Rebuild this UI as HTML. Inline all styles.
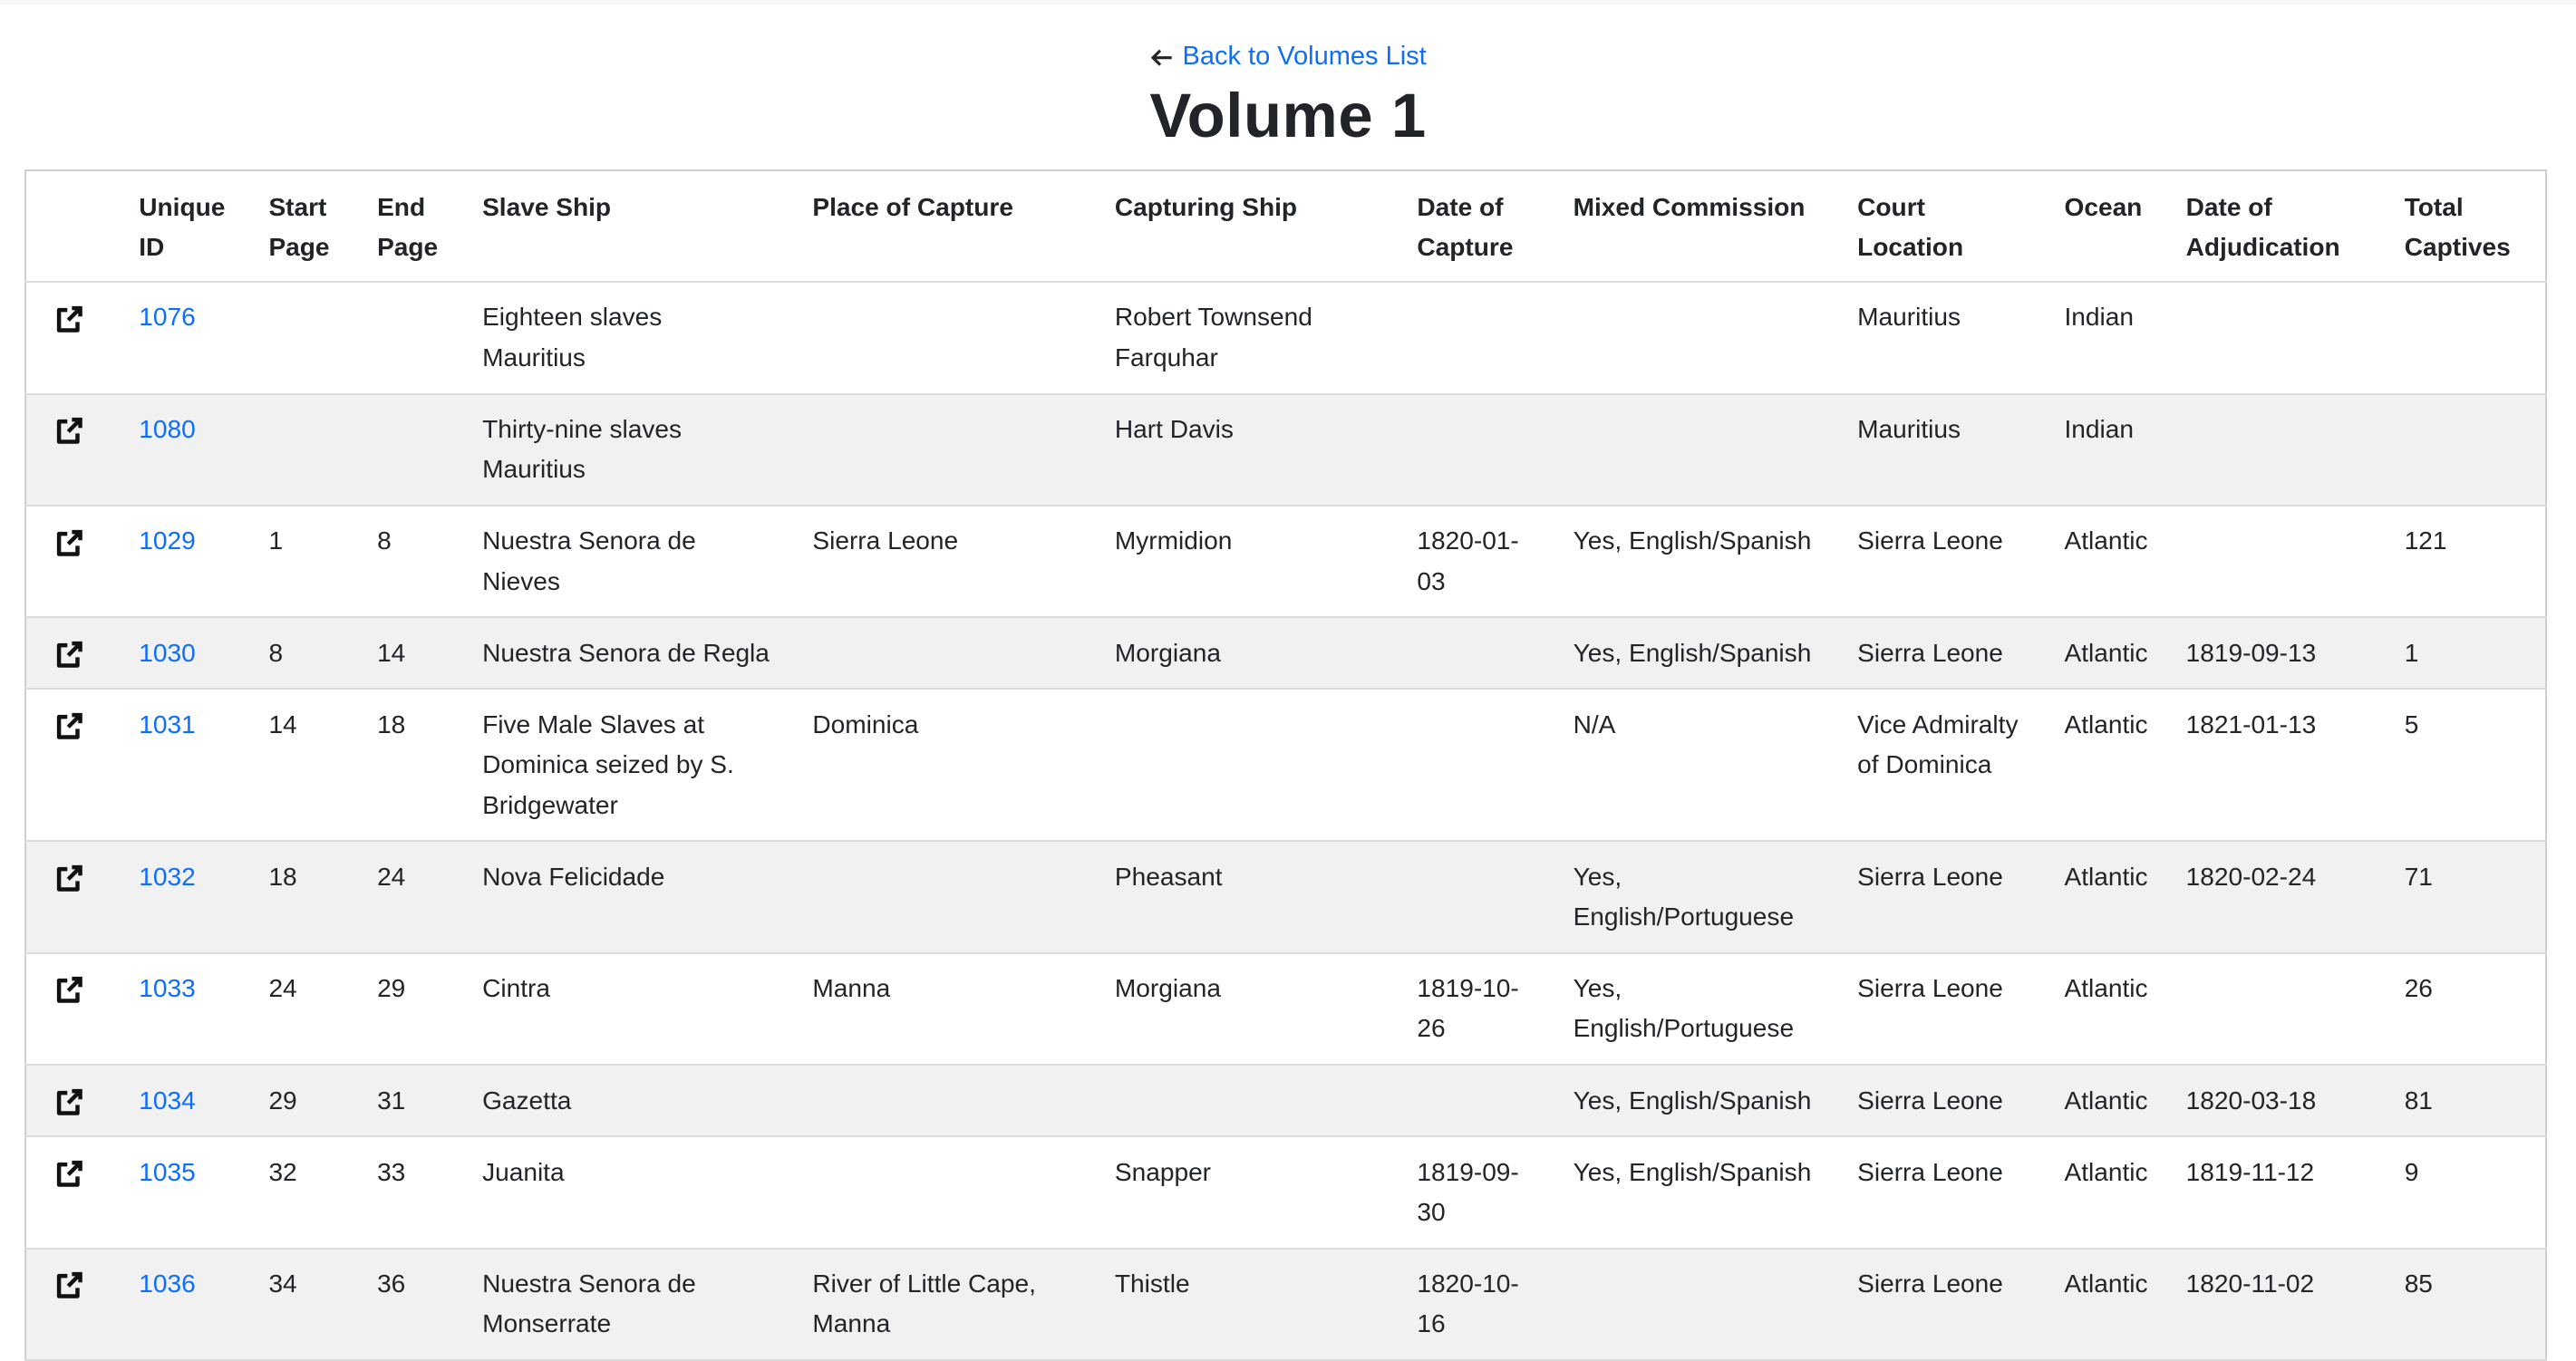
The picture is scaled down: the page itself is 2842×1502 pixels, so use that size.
<!DOCTYPE html>
<html><head><meta charset="utf-8"><style>
html{zoom:1.8125}
body{margin:0;width:1568px;height:811px;overflow:hidden;background:#fff;font-family:"Liberation Sans",sans-serif;color:#212529;font-size:15.5px;line-height:24.5px}
.top{height:3px;background:#f6f7f8}
.back{text-align:center;margin-top:21px;height:20px;line-height:20px;font-size:16px}
.back a{color:#0d6efd;text-decoration:none}
.back svg{vertical-align:-3px;margin-right:5px}
h1{margin:2px 0 0;text-align:center;font-size:38px;line-height:50px;font-weight:bold;height:55px;letter-spacing:0.3px}
table{position:absolute;left:15px;top:103px;width:1534px;border-collapse:collapse;table-layout:fixed;border:1.5px solid #cfcfcf}
td,th{padding:9px 10px 9px 10px;vertical-align:top;text-align:left;white-space:nowrap;border-bottom:1.5px solid #dcdcdc;line-height:24.5px}
th{font-weight:bold;padding-top:10px;padding-bottom:8px}
tr.s td{background:#f1f1f1}
td a{color:#0d6efd;text-decoration:none}
td.i{padding-left:17px}
td.i svg{display:block;margin-top:4px}
</style></head><body>
<div class="top"></div>
<div class="back"><a href="#"><svg width="15" height="14" viewBox="0 0 16 16"><path d="M15 8H2M7 3L2 8l5 5" fill="none" stroke="#212529" stroke-width="2"/></svg>Back to Volumes List</a></div>
<h1>Volume 1</h1>
<table>
<colgroup><col style="width:59px"><col style="width:79px"><col style="width:66px"><col style="width:64px"><col style="width:201px"><col style="width:184px"><col style="width:184px"><col style="width:95px"><col style="width:173px"><col style="width:126px"><col style="width:74px"><col style="width:133px"><col style="width:96px"></colgroup>
<tr><th></th><th>Unique<br>ID</th><th>Start<br>Page</th><th>End<br>Page</th><th>Slave Ship</th><th>Place of Capture</th><th>Capturing Ship</th><th>Date of<br>Capture</th><th>Mixed Commission</th><th>Court<br>Location</th><th>Ocean</th><th>Date of<br>Adjudication</th><th>Total<br>Captives</th></tr>
<tr><td class="i">ICON</td><td><a href="#">1076</a></td><td></td><td></td><td>Eighteen slaves<br>Mauritius</td><td></td><td>Robert Townsend<br>Farquhar</td><td></td><td></td><td>Mauritius</td><td>Indian</td><td></td><td></td></tr>
<tr class="s"><td class="i">ICON</td><td><a href="#">1080</a></td><td></td><td></td><td>Thirty-nine slaves<br>Mauritius</td><td></td><td>Hart Davis</td><td></td><td></td><td>Mauritius</td><td>Indian</td><td></td><td></td></tr>
<tr><td class="i">ICON</td><td><a href="#">1029</a></td><td>1</td><td>8</td><td>Nuestra Senora de<br>Nieves</td><td>Sierra Leone</td><td>Myrmidion</td><td>1820-01-<br>03</td><td>Yes, English/Spanish</td><td>Sierra Leone</td><td>Atlantic</td><td></td><td>121</td></tr>
<tr class="s"><td class="i">ICON</td><td><a href="#">1030</a></td><td>8</td><td>14</td><td>Nuestra Senora de Regla</td><td></td><td>Morgiana</td><td></td><td>Yes, English/Spanish</td><td>Sierra Leone</td><td>Atlantic</td><td>1819-09-13</td><td>1</td></tr>
<tr><td class="i">ICON</td><td><a href="#">1031</a></td><td>14</td><td>18</td><td>Five Male Slaves at<br>Dominica seized by S.<br>Bridgewater</td><td>Dominica</td><td></td><td></td><td>N/A</td><td>Vice Admiralty<br>of Dominica</td><td>Atlantic</td><td>1821-01-13</td><td>5</td></tr>
<tr class="s"><td class="i">ICON</td><td><a href="#">1032</a></td><td>18</td><td>24</td><td>Nova Felicidade</td><td></td><td>Pheasant</td><td></td><td>Yes,<br>English/Portuguese</td><td>Sierra Leone</td><td>Atlantic</td><td>1820-02-24</td><td>71</td></tr>
<tr><td class="i">ICON</td><td><a href="#">1033</a></td><td>24</td><td>29</td><td>Cintra</td><td>Manna</td><td>Morgiana</td><td>1819-10-<br>26</td><td>Yes,<br>English/Portuguese</td><td>Sierra Leone</td><td>Atlantic</td><td></td><td>26</td></tr>
<tr class="s"><td class="i">ICON</td><td><a href="#">1034</a></td><td>29</td><td>31</td><td>Gazetta</td><td></td><td></td><td></td><td>Yes, English/Spanish</td><td>Sierra Leone</td><td>Atlantic</td><td>1820-03-18</td><td>81</td></tr>
<tr><td class="i">ICON</td><td><a href="#">1035</a></td><td>32</td><td>33</td><td>Juanita</td><td></td><td>Snapper</td><td>1819-09-<br>30</td><td>Yes, English/Spanish</td><td>Sierra Leone</td><td>Atlantic</td><td>1819-11-12</td><td>9</td></tr>
<tr class="s"><td class="i">ICON</td><td><a href="#">1036</a></td><td>34</td><td>36</td><td>Nuestra Senora de<br>Monserrate</td><td>River of Little Cape,<br>Manna</td><td>Thistle</td><td>1820-10-<br>16</td><td></td><td>Sierra Leone</td><td>Atlantic</td><td>1820-11-02</td><td>85</td></tr>
</table>
<script>
document.querySelectorAll('td.i').forEach(function(t){t.innerHTML='<svg width="18" height="18" viewBox="0 0 16 16"><path d="M7 3H2.5v11h10V9.5" fill="none" stroke="#111" stroke-width="2.2" stroke-linejoin="round"/><path d="M7.5 8.5L13.5 2.5M9.5 2h4.5v4.5" fill="none" stroke="#111" stroke-width="2.2"/></svg>';});
</script>
</body></html>
